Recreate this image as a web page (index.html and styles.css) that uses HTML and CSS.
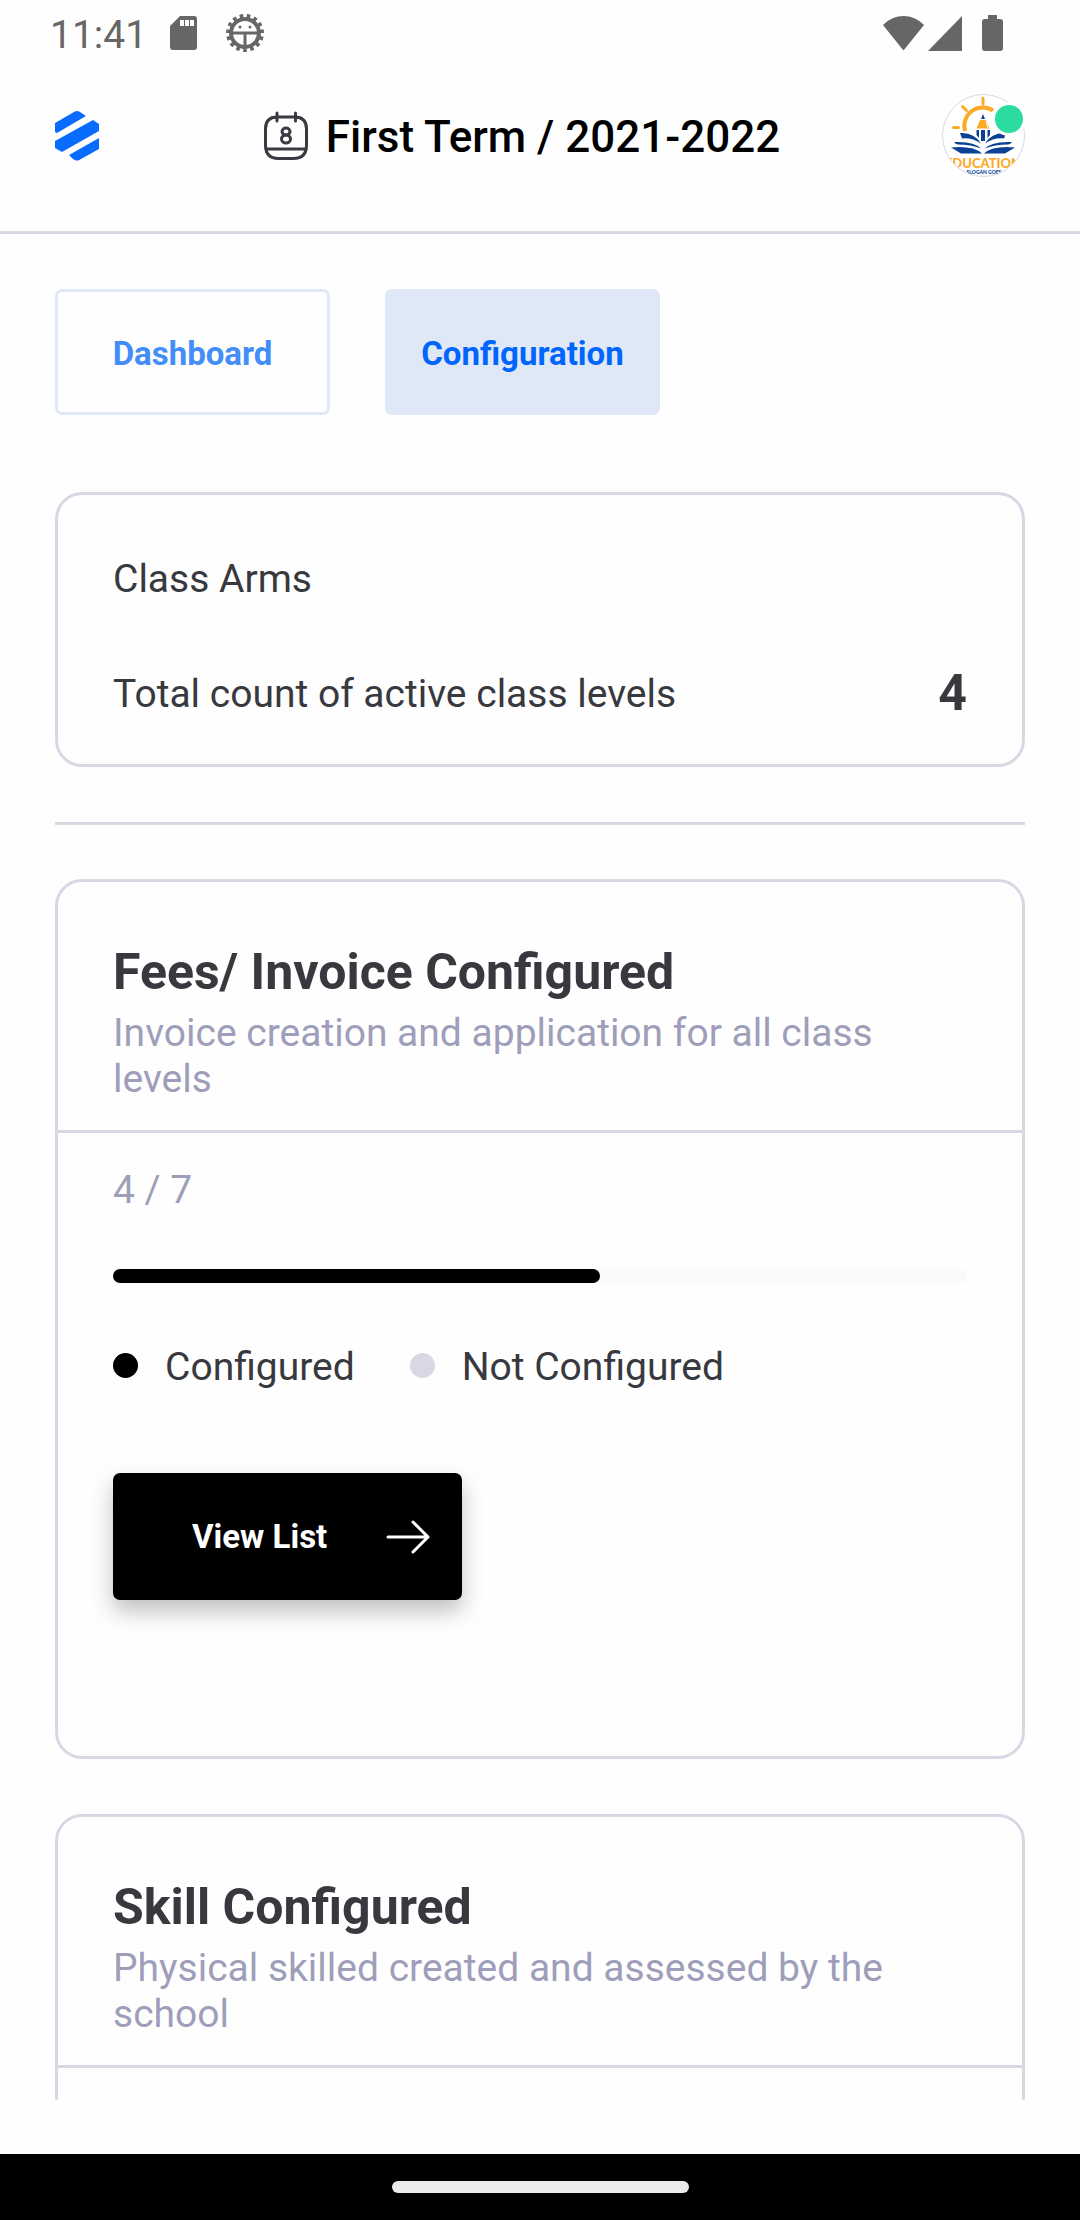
FILE: index.html
```html
<!DOCTYPE html>
<html lang="en">
<head>
<meta charset="utf-8">
<meta name="viewport" content="width=device-width, initial-scale=1">
<title>Configuration</title>
<link rel="stylesheet" href="styles.css">
</head>
<body>
<div class="app">
  <div class="status">
    <div class="status-left">
      <span class="clock">11:41</span>
      <svg class="sd" width="28" height="34" viewBox="0 0 28 34" aria-hidden="true">
        <path fill="#666" fill-rule="evenodd" d="M10 0h14a3 3 0 0 1 3 3v28a3 3 0 0 1-3 3H3a3 3 0 0 1-3-3V10zM10 4v6h4V4zM15 4v6h4V4zM20 4v6h4V4z"/>
      </svg>
      <svg width="40" height="40" viewBox="0 0 40 40" aria-hidden="true">
        <g fill="none" stroke="#666">
          <circle cx="20" cy="20" r="14" stroke-width="4"/>
          <circle cx="20" cy="20" r="17" stroke-width="4" pathLength="90" stroke-dasharray="3 3" stroke-dashoffset="-21"/>
          <path stroke-width="3" d="M7 20h26M20 20v14"/>
        </g>
        <circle cx="15" cy="14" r="1.5" fill="#666"/><circle cx="25" cy="14" r="1.5" fill="#666"/>
      </svg>
    </div>
    <div class="status-right">
      <svg width="41" height="35" viewBox="0 0 41 35" aria-hidden="true"><path fill="#666" d="M0 9C12-3 29-3 41 9L20.500 34.500z"/></svg>
      <svg width="34" height="35" viewBox="0 0 34 35" aria-hidden="true"><path fill="#666" d="M34 0v35H0z"/></svg>
      <svg class="battery" width="21" height="36" viewBox="0 0 21 36" aria-hidden="true"><path fill="#666" d="M6 0h9v4h3a3 3 0 0 1 3 3v26a3 3 0 0 1-3 3H3a3 3 0 0 1-3-3V7a3 3 0 0 1 3-3h3z"/></svg>
    </div>
  </div>

  <header class="header">
    <svg width="44" height="50" viewBox="0 0 44 50" role="img" aria-label="Logo">
      <g fill="#0a6cff">
        <path d="M0 12L19 1Q22-1 25 1L31 5L2 22L0 21z"/>
        <path d="M0 30L38 9L44 13V20L7 41L0 37z"/>
        <path d="M14 44L44 27V38L26 48Q22 51 18 48z"/>
      </g>
    </svg>
    <div class="term">
      <svg width="44" height="50" viewBox="0 0 44 50" aria-hidden="true">
        <g fill="none" stroke="#3a3a42" stroke-width="3" stroke-linecap="round">
          <path d="M13 6h18q11.500 0 11.500 12v16q0 13.500-13 13.500h-15Q1.500 47.500 1.500 34V18Q1.500 6 13 6zM2 38h40M13 2v8M31.500 2v8"/>
          <ellipse cx="22" cy="20.500" rx="4" ry="3.500"/>
          <ellipse cx="22" cy="28" rx="4.500" ry="4"/>
        </g>
      </svg>
      <h1 class="term-title">First Term / 2021-2022</h1>
    </div>
    <div class="avatar">
      <svg width="83" height="83" viewBox="0 0 83 83" role="img" aria-label="School account">
        <defs><clipPath id="round"><circle cx="41.500" cy="41.500" r="40.500"/></clipPath></defs>
        <circle cx="41.500" cy="41.500" r="41" fill="#fff" stroke="#d8d8e4"/>
        <g clip-path="url(#round)">
          <g fill="none" stroke="#fca928">
            <path stroke-width="4" d="M23 37A18.500 18.500 0 0 1 51 16.500"/>
            <path stroke-width="3" stroke-linecap="round" d="M41 4v6M20.500 12.500l4 4M11.500 33.500h5"/>
          </g>
          <path fill="#fca928" d="M38 26h6l3.500 8.500h-13z"/>
          <path fill="#0b4296" d="M41 20l2 5h-4zM34.500 36h2.500v8l-2.500-3zM39 36h4v11h-4zM45.500 36h2.500v5l-2.500 3z"/>
          <path fill="none" stroke="#fff" d="M44 27l2 7"/>
          <g fill="#0b4296">
            <path d="M18 39q14-1 21 10.500q-9-6-19-5z"/>
            <path d="M12 48q20-1 27 6.500q-10-4-23-4q-2 0-4-2.500z"/>
            <path d="M9 53.500q22-2 31 6H19z"/>
          </g>
          <g fill="#0b4296" transform="matrix(-1 0 0 1 82 0)">
            <path d="M18 39q14-1 21 10.500q-9-6-19-5z"/>
            <path d="M12 48q20-1 27 6.500q-10-4-23-4q-2 0-4-2.500z"/>
            <path d="M9 53.500q22-2 31 6H19z"/>
          </g>
          <text class="crest-name" x="41" y="74" text-anchor="middle">EDUCATION</text>
          <text class="crest-slogan" x="42" y="80" text-anchor="middle">SLOGAN GOES</text>
        </g>
      </svg>
      <span class="online"></span>
    </div>
  </header>

  <main class="content">
    <nav class="tabs">
      <button class="tab" type="button">Dashboard</button>
      <button class="tab tab-active" type="button">Configuration</button>
    </nav>

    <section class="card summary">
      <p class="label">Class Arms</p>
      <div class="summary-row">
        <p class="label">Total count of active class levels</p>
        <strong class="count">4</strong>
      </div>
    </section>

    <hr class="divider">

    <section class="card">
      <div class="card-head">
        <h2 class="card-title">Fees/ Invoice Configured</h2>
        <p class="muted">Invoice creation and application for all class levels</p>
      </div>
      <div class="card-body">
        <p class="muted">4 / 7</p>
        <div class="track" role="progressbar" aria-label="Configured" aria-valuemin="0" aria-valuemax="7" aria-valuenow="4"><div class="fill" style="width:57%"></div></div>
        <ul class="legend">
          <li class="legend-item"><span class="dot"></span>Configured</li>
          <li class="legend-item"><span class="dot dot-off"></span>Not Configured</li>
        </ul>
        <button class="view" type="button">View List
          <svg width="44" height="34" viewBox="0 0 44 34" fill="none" stroke="#fff" stroke-width="3" stroke-linecap="round" stroke-linejoin="round" aria-hidden="true"><path d="M2 17h40M27 2l15 15-15 15"/></svg>
        </button>
      </div>
    </section>

    <section class="card">
      <div class="card-head">
        <h2 class="card-title">Skill Configured</h2>
        <p class="muted">Physical skilled created and assessed by the school</p>
      </div>
      <div class="card-body"></div>
    </section>
  </main>

  <div class="system-nav"><span class="handle"></span></div>
</div>
</body>
</html>
```
FILE: styles.css
```css
* { box-sizing: border-box; }
body, h1, h2, p, ul { margin: 0; }
body {
  background: #fefefe;
  color: #38383f;
  font-family: Roboto, "Liberation Sans", sans-serif;
  font-size: 39px;
  line-height: 46px;
}
svg { display: block; flex: none; }
button { font: inherit; cursor: pointer; }

.app { display: flex; flex-direction: column; height: 100vh; overflow: hidden; }

.status {
  display: flex; flex: none; justify-content: space-between; align-items: center;
  height: 66px; padding: 0 77px 0 50px; color: #666;
}
.status-left, .status-right { display: flex; align-items: center; }
.status-left { gap: 27px; }
.clock { padding-top: 3px; }
.sd { margin-left: -4px; }
.status-right { gap: 4px; }
.battery { margin-left: 16px; }

.header {
  display: flex; flex: none; justify-content: space-between; align-items: center;
  padding: 28px 55px 54px; border-bottom: 3px solid #d8d8e4;
}
.term { display: flex; align-items: center; gap: 18px; margin-left: 3px; }
.term-title { padding-top: 3px; color: #000; font-size: 44px; font-weight: 500; line-height: 52px; }
.avatar { position: relative; }
.online {
  position: absolute; top: 8px; right: -1px; width: 34px; height: 34px;
  border: 3px solid #fefefe; border-radius: 50%; background: #2cdc9f;
}
.crest-name { fill: #fca928; font: 900 13px Lato, sans-serif; }
.crest-slogan { fill: #0b4296; font: 900 5px Lato, sans-serif; }

.content {
  display: flex; flex-direction: column; flex: 1; gap: 55px; min-height: 0;
  margin-bottom: 54px; padding: 55px 55px 0; overflow: hidden;
}
.content > * { flex: none; }

.tabs { display: flex; gap: 55px; margin-bottom: 22px; }
.tab {
  width: 275px; height: 126px; padding: 3px 0 0; border: 3px solid #dfe8f7; border-radius: 7px;
  background: none; color: #428df8; font-size: 33px; font-weight: 700;
}
.tab-active { background: #dfe8f7; color: #0066fb; }

.card { border: 3px solid #d8d8e4; border-radius: 27px; }
.summary { display: flex; flex-direction: column; gap: 62px; padding: 61px 55px 41px; }
.summary-row { display: flex; justify-content: space-between; align-items: center; }
.count { font-size: 50px; line-height: 59px; }
.divider { width: 100%; height: 3px; margin: 0 0 -1px; border: 0; background: #d8d8e4; }

.card-head {
  display: flex; flex-direction: column; gap: 8px;
  padding: 61px 55px 28px; border-bottom: 3px solid #d8d8e4;
}
.card-title { font-size: 50px; font-weight: 700; line-height: 59px; }
.muted { color: #9f9eba; }
.card-body { padding: 34px 55px 156px; }
.track { height: 14px; margin-top: 56px; border-radius: 7px; background: #fafafa; }
.fill { height: 100%; border-radius: 7px; background: #000; }
.legend { display: flex; gap: 55px; margin-top: 61px; padding: 0; list-style: none; }
.legend-item { display: flex; align-items: center; gap: 27px; }
.dot { width: 25px; height: 25px; margin-bottom: 4px; border-radius: 50%; background: #000; }
.dot-off { background: #d8d8e4; }
.view {
  display: flex; align-items: center; justify-content: space-between;
  width: 349px; height: 127px; margin-top: 83px; padding: 0 32px 0 79px;
  border: 0; border-radius: 7px; background: #000; color: #fff;
  box-shadow: 0 11px 22px rgba(0, 0, 0, 0.25);
  font-size: 33px; font-weight: 700;
}

.system-nav {
  display: flex; flex: none; align-items: center; justify-content: center;
  height: 66px; background: #000;
}
.handle { width: 297px; height: 12px; border-radius: 6px; background: #ebebeb; }
```
